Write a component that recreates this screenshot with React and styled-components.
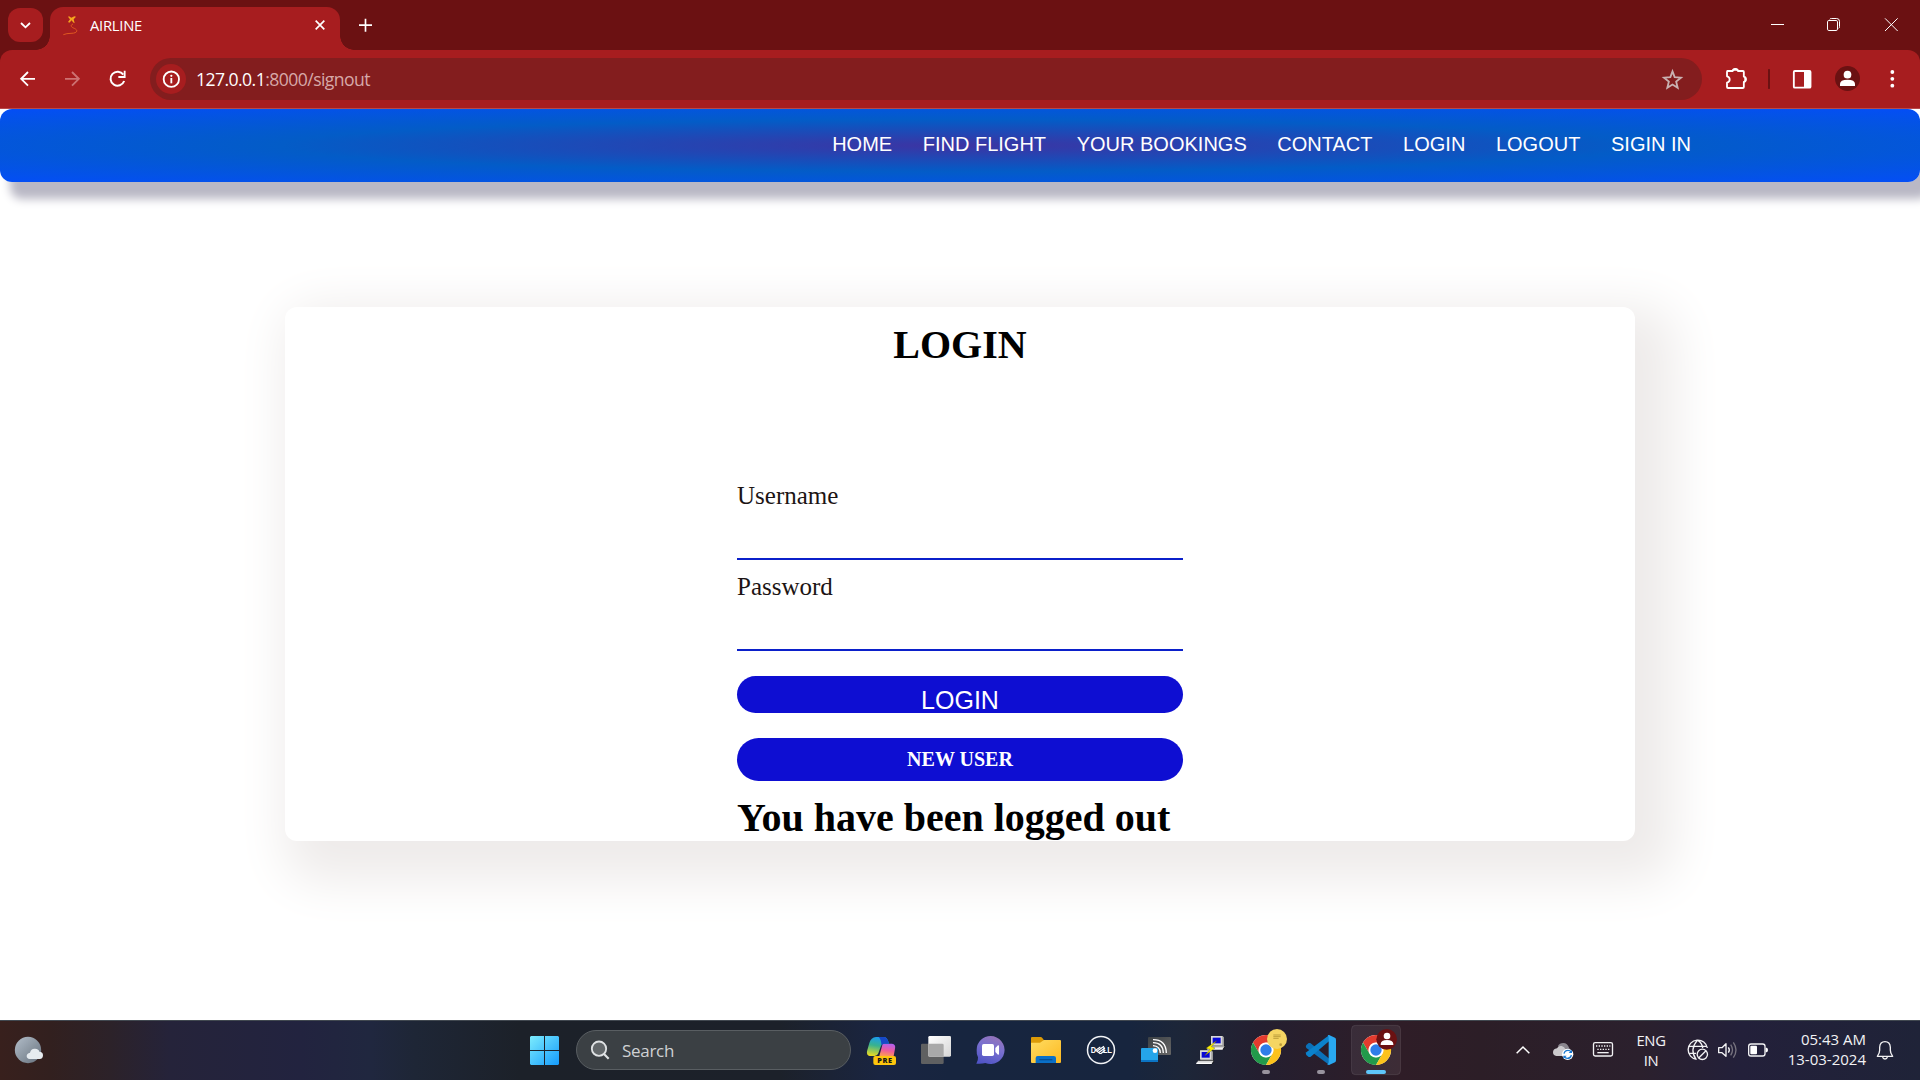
import React from "react";
import styled, { createGlobalStyle } from "styled-components";

const GlobalStyle = createGlobalStyle`
  *, *::before, *::after { box-sizing: border-box; }
  body { margin: 0; background: #fff; overflow: hidden; }
`;

const ui = `"Open Sans", "Noto Sans", sans-serif`;

const Screen = styled.div`
  width: 1920px;
  height: 1080px;
  display: flex;
  flex-direction: column;
  overflow: hidden;
`;

/* ---------- browser chrome ---------- */

const TabStrip = styled.div`
  height: 50px;
  flex: none;
  display: flex;
  background: #6b1112;
  font-family: ${ui};
  padding-left: 8px;
`;

const TabSearch = styled.div`
  width: 35px;
  height: 34px;
  margin-top: 8px;
  border-radius: 12px;
  background: #a71d1f;
  display: flex;
`;

const Tab = styled.div`
  position: relative;
  width: 290px;
  height: 43px;
  margin: 7px 0 0 7px;
  padding-right: 10px;
  border-radius: 13px 13px 0 0;
  background: #a71d1f;
  color: #fff;
  display: flex;
  &::before,
  &::after {
    content: "";
    position: absolute;
    bottom: 0;
    width: 14px;
    height: 14px;
  }
  &::before {
    left: -14px;
    background: radial-gradient(circle at 0 0, transparent 13.5px, #a71d1f 14px);
  }
  &::after {
    right: -14px;
    background: radial-gradient(circle at 100% 0, transparent 13.5px, #a71d1f 14px);
  }
`;

const TabTitle = styled.span`
  flex: 1;
  font-size: 14.8px;
  letter-spacing: -0.25px;
  line-height: 36px;
`;

const Spacer = styled.div`
  flex: 1;
`;

const Glyph = styled.svg`
  display: block;
  flex: none;
  overflow: visible;
`;

const ToolbarBack = styled.div`
  flex: none;
  height: 59px;
  background: #6b1112;
`;

const Toolbar = styled.div`
  height: 59px;
  border-radius: 12px 12px 0 0;
  border-bottom: 1px solid #b8494b;
  background: #a71d1f;
  display: flex;
  padding-left: 12px;
`;

const NavIcons = styled.div`
  display: flex;
  gap: 15px;
  width: 138px;
`;

const AddressBar = styled.div`
  width: 1552px;
  height: 42px;
  margin-top: 8px;
  border-radius: 21px;
  background: #831d1e;
  display: flex;
  align-items: center;
  padding: 0 15px 0 6px;
`;

const InfoBadge = styled.div`
  width: 30px;
  height: 30px;
  border-radius: 50%;
  background: #a71d1f;
`;

const Url = styled.div`
  flex: 1;
  margin-left: 10px;
  font: 17.6px/40px ${ui};
  letter-spacing: -0.56px;
  color: #d7a8a8;
  b {
    font-weight: 400;
    color: #fff;
  }
`;

/* ---------- page ---------- */

const Page = styled.div`
  height: 911px;
  flex: none;
  background: #fff;
  overflow: hidden;
`;

const Navbar = styled.nav`
  height: 73px;
  border-radius: 12px;
  background: radial-gradient(ellipse at center, #3c34a3 0%, #035cc7 50%, #044ef6 100%);
  box-shadow: 10px 17px 10px #b9b8c5;
  display: flex;
  justify-content: flex-end;
  align-items: center;
  gap: 30.6px;
  padding: 0 229px 2px 0;
`;

const NavLink = styled.a`
  font: 20px/23px "Liberation Sans", Arial, sans-serif;
  color: #fff;
`;

const Card = styled.section`
  width: 1350px;
  height: 534px;
  margin: 125px auto 0;
  border-radius: 12px;
  background: #fff;
  box-shadow: 20px 20px 50px 20px #eeebea;
  display: flex;
  flex-direction: column;
  align-items: center;
  font-family: "Liberation Serif", "Times New Roman", serif;
`;

const Title = styled.h1`
  margin: 15px 0 0;
  font-size: 40px;
  line-height: 46px;
  color: #000;
`;

const Form = styled.form`
  width: 446px;
  margin-top: 101px;
  display: flex;
  flex-direction: column;
`;

const Field = styled.label`
  height: 91px;
  padding-top: 13px;
  display: flex;
  flex-direction: column;
  justify-content: space-between;
  border-bottom: 2px solid #0b20ca;
  font-size: 25px;
  line-height: 28px;
  color: #1c1414;
`;

const Submit = styled.button`
  height: 37px;
  margin-top: 25px;
  padding: 10px 0 0;
  border: 0;
  border-radius: 20px;
  background: #0e0ed2;
  color: #fff;
  font: 25px/28px "Liberation Sans", Arial, sans-serif;
`;

const NewUser = styled.a`
  height: 43px;
  margin-top: 25px;
  border-radius: 22px;
  background: #0e0ed2;
  color: #fff;
  font-size: 20px;
  font-weight: 700;
  line-height: 43px;
  text-align: center;
`;

const Message = styled.h1`
  margin: 14px 0 0;
  font-size: 40px;
  line-height: 46px;
  white-space: nowrap;
  color: #000;
`;

/* ---------- taskbar ---------- */

const Taskbar = styled.footer`
  height: 60px;
  flex: none;
  display: flex;
  border-top: 1px solid #414850;
  background: linear-gradient(
    90deg,
    #38201d 0, #32201f 50px, #2c2229 110px, #25233a 170px, #22233f 300px, #20273f 370px,
    #1e2636 415px, #1c2129 520px, #1c212a 780px, #1a2541 880px, #17253f 950px, #17253e 1130px,
    #1d2638 1185px, #241f30 1260px, #2f1d27 1400px, #2c1e27 1480px, #2b202d 1640px,
    #23203a 1740px, #1f2338 1920px
  );
  color: #f2f2f4;
  font-family: ${ui};
`;

const Weather = styled.div`
  width: 517px;
`;

const SearchBox = styled.div`
  width: 275px;
  height: 40px;
  margin: 9px 3px 0 4px;
  border: 1px solid #595e62;
  border-radius: 20px;
  background: #3b4044;
  display: flex;
  align-items: center;
  color: #cfd1d3;
  font-size: 17px;
  letter-spacing: -0.3px;
  line-height: 38px;
  span {
    margin: 1px 0 0 7px;
  }
`;

const Language = styled.div`
  width: 56px;
  padding-top: 9px;
  font-size: 14.8px;
  line-height: 20px;
  text-align: center;
  letter-spacing: -0.3px;
`;

const Clock = styled.div`
  width: 95px;
  margin-right: 4px;
  padding-top: 8px;
  font-size: 15px;
  line-height: 20px;
  text-align: right;
  white-space: nowrap;
`;

function Icon({ x, y = 33, w = 55, h = 59, children }) {
  return (
    <Glyph width={w} height={h} viewBox={`${x} ${y} ${w * 3} ${h * 3}`} fill="none">
      {children}
    </Glyph>
  );
}

const Bar = ({ x, w, children }) => (
  <Icon x={x} y={150} w={w} h={58}>
    {children}
  </Icon>
);

function ChromeLogo({ x }) {
  return (
    <g transform={`translate(${x} 120)`}>
      <circle r="45" fill="#fff" />
      <path d="M0-22.5H39A45 45 0 0 0-39-22.5L-19.5 11.25A22.5 22.5 0 0 1 0-22.5Z" fill="#e33b2e" />
      <path d="M-19.5 11.25L-39-22.5A45 45 0 0 0 0 45L19.5 11.25A22.5 22.5 0 0 1-19.5 11.25Z" fill="#229a4b" />
      <path d="M19.5 11.25L0 45A45 45 0 0 0 39-22.5H0A22.5 22.5 0 0 1 19.5 11.25Z" fill="#fcc21b" />
      <circle r="21.5" fill="#fff" />
      <circle r="17" fill="#2f7de9" />
    </g>
  );
}

function Computer({ x, y }) {
  return (
    <g transform={`translate(${x} ${y})`}>
      <path d="M4 0H40V28H44V36L38 42H-6V34L4 28Z" fill="#111" />
      <path d="M4 0H38L42 4V30H4Z" fill="#9b9b9b" />
      <path d="M3 0H37V27H3Z" fill="#d9d9d9" />
      <path d="M8 5H32V22H8Z" fill="#0808d8" />
      <path d="M-3 31H44L38 40H-8Z" fill="#d8d8d8" />
      <path d="M-8 37H38V41H-8Z" fill="#fff" />
    </g>
  );
}

const links = ["HOME", "FIND FLIGHT", "YOUR BOOKINGS", "CONTACT", "LOGIN", "LOGOUT", "SIGIN IN"];

export default function App() {
  return (
    <Screen>
      <GlobalStyle />
      <TabStrip>
        <TabSearch>
          <Icon x={24} y={24} w={35} h={34}>
            <path d="M63 69L76.500 82L90 69" stroke="#fff" strokeWidth="5.500" />
          </Icon>
        </TabSearch>
        <Tab>
          <Icon x={150} y={21} w={40} h={43}>
            <path d="M206 48L214 53L223 49L228 50L221 58L224 70L219 67L215 61L208 68L204 66L210 58L205 52Z" fill="#f4a51f" />
            <path d="M219 72C209 76 214 82 223 85C237 92 230 100 213 100Q200 100 190 104" stroke="#e0581f" strokeWidth="3" />
          </Icon>
          <TabTitle>AIRLINE</TabTitle>
          <Icon x={930} y={21} w={20} h={43}>
            <path d="M947 62L973 88M973 62L947 88" stroke="#fff" strokeWidth="5" />
          </Icon>
        </Tab>
        <Icon x={1020} y={0} w={50} h={50}>
          <path d="M1077 75.500H1116M1096.500 56V95" stroke="#fff" strokeWidth="5" />
        </Icon>
        <Spacer />
        <Icon x={480} y={0} w={200} h={50}>
          <g stroke="#fff">
            <path d="M633 73.500H672" strokeWidth="3" />
            <rect x="802.500" y="61.500" width="30" height="30" rx="4" strokeWidth="3" />
            <path d="M809 58Q810 55.500 814 55.500H830Q838.500 55.500 838.500 64V80Q838.500 84 836 85" strokeWidth="3" />
            <path d="M975 55L1013 93M1013 55L975 93" strokeWidth="3" />
          </g>
        </Icon>
      </TabStrip>
      <ToolbarBack>
        <Toolbar>
          <NavIcons>
            <Bar x={36} w={30}>
              <path d="M105 236.500H64M84 216L63.500 236.500L84 257" stroke="#fff" strokeWidth="5.500" />
            </Bar>
            <Bar x={171} w={30}>
              <path d="M195 236.500H236M216 216L236.500 236.500L216 257" stroke="#cd7273" strokeWidth="5.500" />
            </Bar>
            <Bar x={306} w={30}>
              <path d="M370 224A21 21 0 1 0 372.500 243" stroke="#fff" strokeWidth="6" />
              <path d="M374 212V231H355" stroke="#fff" strokeWidth="5.500" />
            </Bar>
          </NavIcons>
          <AddressBar>
            <InfoBadge>
              <Icon x={468} y={192} w={30} h={30}>
                <circle cx="514" cy="237.500" r="23" stroke="#fff" strokeWidth="5.500" />
                <path d="M514 234V250" stroke="#fff" strokeWidth="5.500" />
                <circle cx="514" cy="227.500" r="3.300" fill="#fff" />
              </Icon>
            </InfoBadge>
            <Url>
              <b>127.0.0.1</b>:8000/signout
            </Url>
            <Icon x={291} y={174} w={30} h={42}>
              <path
                d="M337.500 214L344 231.500L363 233L348.500 245L353 263.500L337.500 253.500L322 263.500L326.500 245L312 233L331 231.500Z"
                stroke="#c9b1b1"
                strokeWidth="5.500"
              />
            </Icon>
          </AddressBar>
          <Bar x={426} w={218}>
            <path
              d="M502 213H518Q519 207 526 207T534 213H549Q551.500 213 551.500 216V230Q557.500 231 557.500 238T551.500 246V261Q551.500 264 548.500 264H504Q501 264 501 261V248Q509 246 509 238.500T501 229V215Q501 213 504 213Z"
              stroke="#fff"
              strokeWidth="5.500"
              strokeLinejoin="round"
            />
            <path d="M517 212Q519 205 526 205T535 212ZM553 229Q560 231 560 238T553 247Z" fill="#fff" />
            <rect x="624" y="207" width="6" height="60" rx="2" fill="#6b1112" />
            <rect x="701.500" y="213" width="50" height="50" rx="3" stroke="#fff" strokeWidth="5.500" />
            <path d="M732 213H751V263H732Z" fill="#fff" />
            <circle cx="862.500" cy="235.500" r="37.500" fill="#6b1112" />
            <circle cx="862.500" cy="224" r="11.500" fill="#fff" />
            <path d="M840 258V252Q840 239 862.500 239T885 252V258Z" fill="#fff" />
            <g fill="#fff">
              <circle cx="997" cy="216" r="5.700" />
              <circle cx="997" cy="236.500" r="5.700" />
              <circle cx="997" cy="257" r="5.700" />
            </g>
          </Bar>
        </Toolbar>
      </ToolbarBack>

      <Page>
        <Navbar>
          {links.map((l) => (
            <NavLink key={l}>{l}</NavLink>
          ))}
        </Navbar>
        <Card>
          <Title>LOGIN</Title>
          <Form>
            <Field>Username</Field>
            <Field>Password</Field>
            <Submit type="button">LOGIN</Submit>
            <NewUser>NEW USER</NewUser>
            <Message>You have been logged out</Message>
          </Form>
        </Card>
      </Page>

      <Taskbar>
        <Weather>
          <Icon x={0} w={60}>
            <defs>
              <linearGradient id="moon" x1="0" y1="0" x2="1" y2="1">
                <stop stopColor="#b3bec9" />
                <stop offset="1" stopColor="#66717d" />
              </linearGradient>
            </defs>
            <circle cx="84" cy="120" r="39.500" fill="url(#moon)" />
            <path d="M89 147Q80 146 80 138T90 128Q93 115 105 116T118 125Q129 125 129 136T119 147Z" fill="#e6ebef" />
          </Icon>
        </Weather>
        <Icon x={51}>
          <defs>
            <linearGradient id="win" gradientUnits="userSpaceOnUse" x1="90" y1="78" x2="177" y2="165">
              <stop stopColor="#7cecfd" />
              <stop offset="1" stopColor="#159bfb" />
            </linearGradient>
          </defs>
          <path d="M93 78H132V120H90V81ZM135 78H174L177 81V120H135ZM90 123H132V165H93L90 162ZM135 123H177V162L174 165H135Z" fill="url(#win)" />
        </Icon>
        <SearchBox>
          <Icon x={231} y={63} w={38} h={38}>
            <circle cx="297" cy="116" r="21.500" fill="#62676a" stroke="#dfe2e4" strokeWidth="5.500" />
            <path d="M312 132L326 146" stroke="#dfe2e4" strokeWidth="6.500" />
          </Icon>
          <span>Search</span>
        </SearchBox>
        <Icon x={1062}>
          <defs>
            <linearGradient id="cpA" x1="0.500" y1="0" x2="0.300" y2="1">
              <stop stopColor="#1a9bf0" />
              <stop offset="0.450" stopColor="#38b28f" />
              <stop offset="1" stopColor="#eadc22" />
            </linearGradient>
            <linearGradient id="cpB" x1="0.600" y1="0" x2="0.400" y2="1">
              <stop stopColor="#b160f0" />
              <stop offset="0.550" stopColor="#ee5c9c" />
              <stop offset="1" stopColor="#fb9a55" />
            </linearGradient>
          </defs>
          <path d="M1148 101H1176Q1188 102 1185 116L1181 138H1138Z" fill="url(#cpB)" />
          <path d="M1128 81H1153Q1162 82 1167 101H1153Q1145 101 1142 110L1135 130Q1132 138 1124 138H1109Q1099 136 1101 124L1108 99Q1113 82 1128 81Z" fill="url(#cpA)" />
          <path d="M1136 81H1153Q1162 82 1167 101H1153Q1147 101 1144 106Q1144 88 1136 81Z" fill="#1748c8" />
          <rect x="1120" y="138" width="68" height="27" rx="6" fill="#fdc50d" />
          <text x="1155" y="160" textAnchor="middle" fill="#151515" fontFamily="Open Sans, sans-serif" fontWeight="800" fontSize="22" letterSpacing="2">PRE</text>
        </Icon>
        <Icon x={27}>
          <defs>
            <linearGradient id="tv" x1="0" y1="0" x2="1" y2="1">
              <stop stopColor="#fff" />
              <stop offset="1" stopColor="#d6d6d6" />
            </linearGradient>
          </defs>
          <rect x="63" y="101" width="68" height="61" rx="4" fill="#5f6061" />
          <rect x="85" y="78" width="68" height="62" rx="4" fill="url(#tv)" />
          <path d="M85 101H127Q131 101 131 105V140H88Q85 140 85 137Z" fill="#a9a9a9" />
        </Icon>
        <Icon x={192}>
          <defs>
            <linearGradient id="chat" x1="0.700" y1="0" x2="0.300" y2="1">
              <stop stopColor="#9673b8" />
              <stop offset="0.400" stopColor="#7a71cf" />
              <stop offset="1" stopColor="#5054c6" />
            </linearGradient>
          </defs>
          <path d="M272 78A42 42 0 1 1 256 159Q247 162 229 161Q235 152 234 142Q229 132 230 120A42 42 0 0 1 272 78Z" fill="url(#chat)" />
          <rect x="246" y="102" width="36" height="36" rx="5" fill="#fff" />
          <path d="M286 114L294 106Q297 105 297 109V131Q297 135 294 134L286 126Z" fill="#fff" />
        </Icon>
        <Icon x={357}>
          <defs>
            <linearGradient id="fold" x1="0" y1="0" x2="1" y2="1">
              <stop stopColor="#ffdc62" />
              <stop offset="1" stopColor="#fdb920" />
            </linearGradient>
          </defs>
          <path d="M393 84Q393 81 396 81H422Q425 81 427 84L432 91V110H393Z" fill="#dc9a07" />
          <path d="M393 98H420L432 90H480Q483 90 483 93V156Q483 159 480 159H396Q393 159 393 156Z" fill="url(#fold)" />
          <path d="M407 159V144Q407 138 413 138H461Q468 138 468 144V159Z" fill="#0a70c8" />
          <path d="M418 149H457" stroke="#064f96" strokeWidth="4" />
        </Icon>
        <Icon x={522}>
          <circle cx="603" cy="120" r="40.500" stroke="#f1f3f6" strokeWidth="4.500" />
          <text x="572" y="129" fill="#fff" fontFamily="Liberation Sans, sans-serif" fontWeight="700" fontSize="25" textLength="16" lengthAdjust="spacingAndGlyphs">D</text>
          <path d="M601 111L587 121L601 131M612 109L592 123M615 114L597 127M602 131L616 120" stroke="#fff" strokeWidth="3.500" />
          <text x="608" y="129" fill="#fff" fontFamily="Liberation Sans, sans-serif" fontWeight="700" fontSize="25" textLength="28" lengthAdjust="spacingAndGlyphs">LL</text>
        </Icon>
        <Icon x={687}>
          <defs>
            <linearGradient id="cast" x1="0" y1="0" x2="1" y2="1">
              <stop stopColor="#3c4145" />
              <stop offset="1" stopColor="#666" />
            </linearGradient>
          </defs>
          <rect x="744" y="81" width="69" height="54" rx="3" fill="url(#cast)" />
          <rect x="723" y="114" width="51" height="42" rx="3" fill="#25a5ea" />
          <path d="M723 150H774V153Q774 156 771 156H726Q723 156 723 153Z" fill="#0b74c4" />
          <circle cx="765" cy="122" r="7" fill="#fff" />
          <path d="M759 107Q780 108 781 129M759 98Q789 98 790 129M759 89Q798 89 799 129" stroke="#fff" strokeWidth="4" />
        </Icon>
        <Icon x={12}>
          <Computer x={90} y={78} />
          <Computer x={57} y={121} />
          <path d="M110 92L78 115L90 118L74 137L105 114L94 110Z" fill="#fff200" stroke="#5a5500" strokeWidth="1" />
        </Icon>
        <Icon x={177}>
          <ChromeLogo x={258} />
          <circle cx="291" cy="87" r="30" fill="#f5d562" />
          <path d="M280 75H302M280 80H302M280 85H296" stroke="#bd9f3c" strokeWidth="3" />
          <circle cx="302" cy="104" r="4" fill="#bb9c39" />
          <rect x="246" y="180" width="24" height="12" rx="6" fill="#98939e" />
        </Icon>
        <Icon x={342}>
          <path d="M379 105L386 99Q389 98 392 100L448 146V165L379 114Q376 110 379 105Z" fill="#0b71b9" />
          <path d="M379 135L386 141Q389 142 392 140L448 93V75L379 127Q376 131 379 135Z" fill="#0b82cc" />
          <path d="M443 76L447 75L465 83Q468 85 468 89V151Q468 155 465 157L447 165L441 163Q446 162 446 157V83Q446 78 443 76Z" fill="#29a8f0" />
          <rect x="411" y="180" width="24" height="12" rx="6" fill="#98939e" />
        </Icon>
        <Icon x={507}>
          <rect x="514.500" y="46" width="147" height="148" rx="12" fill="#fff" fillOpacity="0.070" stroke="#fff" strokeOpacity="0.090" strokeWidth="3" />
          <ChromeLogo x={588} />
          <circle cx="620" cy="88" r="31" fill="#6b1112" />
          <circle cx="621" cy="78" r="10" fill="#fff" />
          <path d="M602 105V102Q603 90 621 90T640 102V105Z" fill="#fff" />
          <rect x="558" y="180" width="60" height="12" rx="6" fill="#5ec6fa" />
        </Icon>
        <Spacer />
        <Icon x={69} w={40}>
          <path d="M110 130L129 111L148 130" stroke="#fff" strokeWidth="4.500" />
        </Icon>
        <Icon x={189} w={40}>
          <path d="M234 108Q238 99 250 99T268 115Q274 120 271 128L250 125Z" fill="#8a868e" />
          <path d="M229 138Q219 137 219 127T231 115Q236 106 245 108T256 118L265 122L250 138Z" fill="#cbc9cc" />
          <circle cx="263" cy="133" r="17" fill="#fff" />
          <path d="M252 131Q254 121 264 121Q270 121 274 126M274 135Q272 145 262 145Q256 145 252 140" stroke="#1877cf" strokeWidth="4" />
          <path d="M276 119V129H266ZM250 147V137H260Z" fill="#1877cf" />
        </Icon>
        <Icon x={309} w={40}>
          <rect x="340.500" y="98" width="57" height="40" rx="5" stroke="#f2f2f4" strokeWidth="4" />
          <path d="M348 108H391M352 118H389" stroke="#f2f2f4" strokeWidth="4" strokeDasharray="4 4" />
          <path d="M352 128H386" stroke="#f2f2f4" strokeWidth="4" />
        </Icon>
        <Language>
          ENG
          <br />
          IN
        </Language>
        <Icon x={597} w={34}>
          <g stroke="#f2f2f4" strokeWidth="4">
            <path d="M682 114A29 29 0 1 0 650 148M627 109H680M627 130H648M652 91Q628 118 648 148M654 91Q667 100 668 114" />
            <circle cx="667" cy="133" r="15.500" />
            <path d="M656 144L678 122" />
          </g>
        </Icon>
        <Icon x={699} w={30}>
          <path d="M716 113H726L738 101V139L726 128H716Z" stroke="#f2f2f4" strokeWidth="4" strokeLinejoin="round" />
          <path d="M745 112Q751 120 745 128" stroke="#f2f2f4" strokeWidth="4" />
          <path d="M752 104Q763 120 752 136M760 97Q776 120 760 143" stroke="#77737f" strokeWidth="4" />
        </Icon>
        <Icon x={789} w={28}>
          <rect x="806" y="102" width="49" height="36" rx="7" stroke="#f2f2f4" strokeWidth="4" />
          <rect x="811" y="107" width="20" height="26" rx="3" fill="#fff" />
          <path d="M857 113H860Q864 114 864 120T860 127H857Z" fill="#fff" />
        </Icon>
        <Clock>
          05:43 AM
          <br />
          13-03-2024
        </Clock>
        <Icon x={1170} w={50}>
          <path d="M1192 139Q1199 130 1199 121V112Q1200 95 1215 95T1231 112V121Q1231 130 1238 139Z" stroke="#f2f2f4" strokeWidth="4" strokeLinejoin="round" />
          <path d="M1208 141Q1209 147 1215 147T1222 141" stroke="#f2f2f4" strokeWidth="4" />
        </Icon>
      </Taskbar>
    </Screen>
  );
}
